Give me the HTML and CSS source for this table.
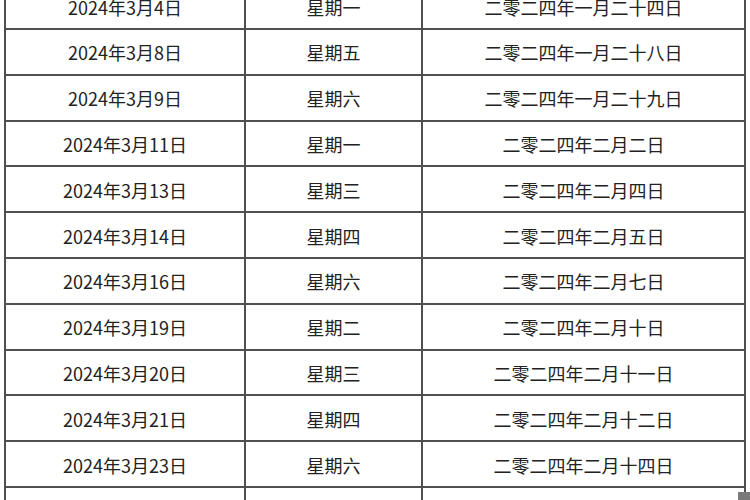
FILE: index.html
```html
<!DOCTYPE html>
<html lang="zh">
<head>
<meta charset="utf-8">
<link rel="stylesheet" href="styles.css">
</head>
<body>
<div class="table">
  <div class="cell">2024年3月4日</div><div class="cell">星期一</div><div class="cell">二零二四年一月二十四日</div>
  <div class="cell">2024年3月8日</div><div class="cell">星期五</div><div class="cell">二零二四年一月二十八日</div>
  <div class="cell">2024年3月9日</div><div class="cell">星期六</div><div class="cell">二零二四年一月二十九日</div>
  <div class="cell">2024年3月11日</div><div class="cell">星期一</div><div class="cell">二零二四年二月二日</div>
  <div class="cell">2024年3月13日</div><div class="cell">星期三</div><div class="cell">二零二四年二月四日</div>
  <div class="cell">2024年3月14日</div><div class="cell">星期四</div><div class="cell">二零二四年二月五日</div>
  <div class="cell">2024年3月16日</div><div class="cell">星期六</div><div class="cell">二零二四年二月七日</div>
  <div class="cell">2024年3月19日</div><div class="cell">星期二</div><div class="cell">二零二四年二月十日</div>
  <div class="cell">2024年3月20日</div><div class="cell">星期三</div><div class="cell">二零二四年二月十一日</div>
  <div class="cell">2024年3月21日</div><div class="cell">星期四</div><div class="cell">二零二四年二月十二日</div>
  <div class="cell">2024年3月23日</div><div class="cell">星期六</div><div class="cell">二零二四年二月十四日</div>
  <div class="cell"></div><div class="cell"></div><div class="cell"></div>
</div>
<div class="corner"></div>
</body>
</html>
```
FILE: styles.css
```css
html, body {
  margin: 0;
  padding: 0;
  background: #ffffff;
  overflow: hidden;
  width: 750px;
  height: 500px;
}
body {
  position: relative;
  font-family: "Noto Sans CJK SC", "Noto Sans", sans-serif;
  color: #222222;
}
.table {
  display: grid;
  grid-template-columns: 240px 177px 323px;
  grid-auto-rows: 45.8px;
  margin-top: -17.8px;
  margin-left: 4px;
  width: 742px;
  border-left: 2px solid #505050;
  border-top: 2px solid #505050;
  box-sizing: border-box;
}
.cell {
  box-sizing: border-box;
  border-right: 2px solid #505050;
  border-bottom: 2px solid #505050;
  display: flex;
  align-items: center;
  justify-content: center;
  font-size: 18px;
  line-height: 1;
  padding-top: 1px;
}
.corner {
  position: absolute;
  right: 0;
  bottom: 0;
  width: 12px;
  height: 8px;
  background: #7a7a7a;
}
```
